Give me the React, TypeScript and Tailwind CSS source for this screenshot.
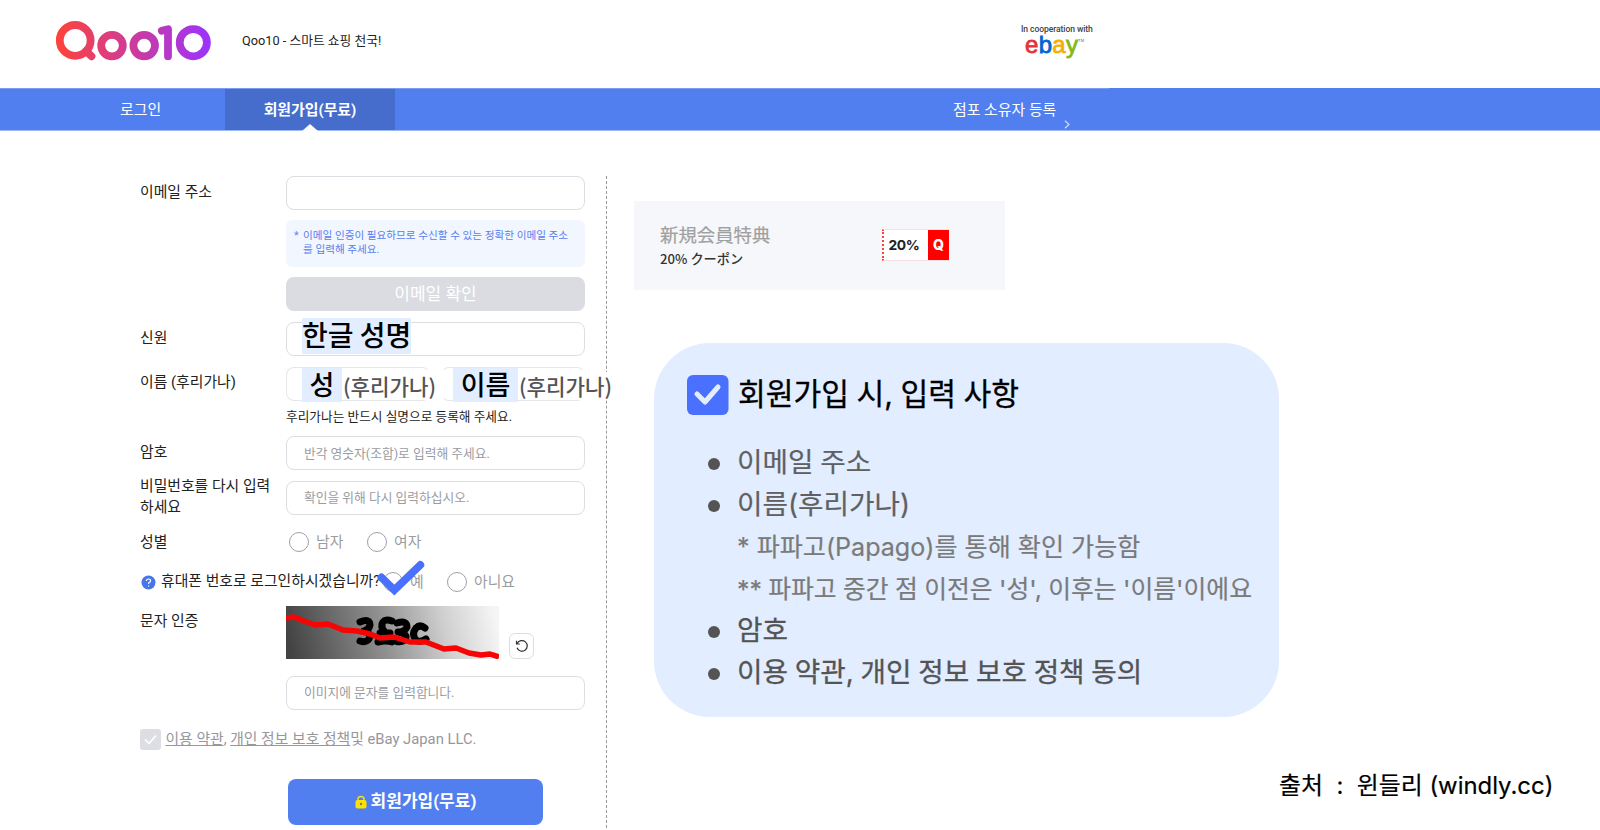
import React from "react";

const kr = "font-['Roboto','Noto_Sans_CJK_KR',sans-serif]";
const note = "font-['Noto_Sans_CJK_KR',sans-serif]";
const guide = "font-['Inter','Noto_Sans_CJK_KR',sans-serif]";

function Logo() {
  return (
    <svg width="160" height="42" viewBox="0 0 160 42" fill="none" strokeLinecap="round">
      <defs>
        <linearGradient id="brand" gradientUnits="userSpaceOnUse" x1="0" y1="0" x2="156" y2="0">
          <stop offset="0" stopColor="#ff4338" />
          <stop offset="1" stopColor="#9b33ff" />
        </linearGradient>
      </defs>
      <g stroke="url(#brand)" strokeWidth="7.8">
        <circle cx="20.2" cy="20.4" r="15.4" />
        <path d="M31 31 L36.5 36.3" />
        <circle cx="57" cy="25.6" r="10.8" />
        <circle cx="89.2" cy="25.6" r="10.8" />
        <path d="M106.8 10.8 L113 9.2 V36.2" strokeLinejoin="round" />
        <circle cx="138.3" cy="22.7" r="13.6" />
      </g>
    </svg>
  );
}

function Header() {
  return (
    <header className="flex h-[88px] items-start">
      <div className="mt-5 ml-[55px] w-[156px]"><Logo /></div>
      <p className="mt-[31px] ml-[31px] w-[200px] text-[12.75px] leading-5 whitespace-nowrap text-[#222]">Qoo10 - 스마트 쇼핑 천국!</p>
      <div className="mt-6 ml-[579px] w-[72px]">
        <p className="text-[8.6px] leading-[10px] font-medium tracking-[-0.1px] whitespace-nowrap text-[#444]">In cooperation with</p>
        <p className="ml-1 flex items-start font-['Liberation_Sans',sans-serif] text-[24px] leading-[22px] tracking-[0.3px]">
          <span className="text-[#e53238] [-webkit-text-stroke:0.8px]">e</span><span className="text-[#0064d2] [-webkit-text-stroke:0.8px]">b</span><span className="text-[#f5af02] [-webkit-text-stroke:0.8px]">a</span><span className="text-[#86b817] [-webkit-text-stroke:0.8px]">y</span>
          <span className="text-[4px] leading-[14px] tracking-normal text-[#666]">TM</span>
        </p>
      </div>
    </header>
  );
}

function Nav() {
  return (
    <nav className="h-[43px] border-b border-[#9db8f6] bg-[#517fef] text-[14.9px] leading-[43px] whitespace-nowrap text-white">
      <div className="flex h-[42px] w-[1109px] border-t border-[#7a9df3]">
        <span className="w-[225px] pl-[120px]">로그인</span>
        <span className="relative w-[170px] bg-[#466dcb] text-center font-bold">
          회원가입(무료)
          <svg className="absolute -bottom-px left-[77px]" width="16" height="7"><path d="M8 0 L16 7 H0Z" fill="#fff" /></svg>
        </span>
        <span className="ml-[558px]">점포 소유자 등록</span>
        <svg className="mt-[31px] ml-[7px]" width="8" height="9" fill="none" stroke="#cfdcff" strokeWidth="1.2"><path d="M2 .8 L6 4.5 L2 8.2" /></svg>
      </div>
    </nav>
  );
}

function Field({ children, className = "" }: { children?: React.ReactNode; className?: string }) {
  return <div className={`flex h-[34px] items-center rounded-lg border border-[#dddee3] bg-white text-[12.75px] whitespace-nowrap text-[#9b9ca1] ${className}`}>{children}</div>;
}

function Row({ label, className = "", labelClass = "leading-8", children }: { label: string; className?: string; labelClass?: string; children?: React.ReactNode }) {
  return (
    <div className={`flex items-start ${className}`}>
      <div className={`w-[146px] shrink-0 text-[14.85px] whitespace-pre text-[#222] ${labelClass}`}>{label}</div>
      <div className="w-[299px] shrink-0">{children}</div>
    </div>
  );
}

function Radio({ text, className }: { text: string; className: string }) {
  return (
    <span className={`flex items-center ${className}`}>
      <span className="h-5 w-5 shrink-0 rounded-full border border-[#9fa0a8]" />
      <span className="-mt-px ml-[7px] text-[14.85px] leading-5 text-[#9b9ca1]">{text}</span>
    </span>
  );
}

function Captcha() {
  return (
    <svg width="213" height="53" viewBox="0 0 213 53">
      <defs>
        <linearGradient id="shade" gradientUnits="userSpaceOnUse" x1="5" y1="48" x2="208" y2="4">
          <stop offset="0" stopColor="#434343" />
          <stop offset="0.45" stopColor="#909090" />
          <stop offset="0.75" stopColor="#cfcfcf" />
          <stop offset="1" stopColor="#f5f5f5" />
        </linearGradient>
      </defs>
      <rect width="213" height="53" fill="url(#shade)" />
      <g fill="none" stroke="#000" strokeWidth="7" strokeLinecap="round" strokeLinejoin="round">
        <path d="M74 16 Q84 12 84 19 Q83 24 78 25 Q86 27 83 33 Q80 37 74 35" />
        <path d="M106 15 Q98 12 96 18 Q95 23 99 26 M94 27 H104 M98 28 Q98 35 92 36 Q100 34 106 36" />
        <path d="M111 17 Q121 14 121 21 Q119 26 112 26 Q123 28 119 34 Q114 37 110 35" />
        <path d="M139 22 Q134 18 130 22 Q125 28 130 34 Q134 37 140 33" />
      </g>
      <path d="M0 12 L8 11 L18 15 L29 19 L42 18 L57 24 L71 25 L84 28 L94 32 L108 31 L124 36 L140 36 L158 43 L170 42 L183 47 L195 49 L204 48 L213 51" fill="none" stroke="#f60505" strokeWidth="5.5" strokeLinejoin="round" />
    </svg>
  );
}

function SignupForm() {
  return (
    <form className="relative w-[466px] shrink-0 pt-[45px]">
      <Row label="이메일 주소" className="h-11"><Field /></Row>
      <Row label="" className="h-[57px]">
        <div className="h-[47px] rounded-md bg-[#f2f6ff] pt-[9px] pl-[17px] text-[10.62px] leading-[14px] whitespace-nowrap text-[#5781ef]">
          <span className="-ml-[9px] inline-block w-[9px]">*</span>이메일 인증이 필요하므로 수신할 수 있는 정확한 이메일 주소<br />를 입력해 주세요.
        </div>
      </Row>
      <Row label="" className="h-[45px]">
        <div className="h-[34px] rounded-lg bg-[#dbdce1] text-center text-[17px] leading-[34px] text-white">이메일 확인</div>
      </Row>
      <Row label="신원" className="h-[45px]">
        <Field className="items-start pl-[15px]">
          <span className={`-mt-[5px] h-[36px] w-[109px] bg-[#e2edff] text-[28px] leading-[33px] font-medium text-black ${note}`}>한글 성명</span>
        </Field>
      </Row>
      <Row label="이름 (후리가나)" labelClass="leading-[31px]" className="h-[35px]">
        <div className={`flex gap-[11px] text-[28px] font-medium whitespace-nowrap text-black ${note}`}>
          {[["성", "ml-[15px] w-10", "border-[#e6e7ea] border-r-transparent"], ["이름", "ml-[11px] w-[65px]", "border-[#e6e7ea] border-x-transparent"]].map(([t, w, b]) => (
            <div key={t} className={`flex h-[34px] w-[144px] shrink-0 items-start rounded-lg border ${b}`}>
              <span className={`h-[34px] shrink-0 bg-[#e2edff] text-center text-[27px] leading-[31px] ${w}`}>{t}</span>
              <span className="relative mt-[4px] ml-px bg-white text-[21.2px] leading-[28px] text-[#545454]">(후리가나)</span>
            </div>
          ))}
        </div>
      </Row>
      <Row label="" className="h-[34px]"><p className="pt-[5px] text-[12.7px] leading-5 text-[#222]">후리가나는 반드시 실명으로 등록해 주세요.</p></Row>
      <Row label="암호" className="h-[44px]"><Field className="pt-px pl-[17px]">반각 영숫자(조합)로 입력해 주세요.</Field></Row>
      <Row label={"비밀번호를 다시 입력\n하세요"} labelClass="leading-[21px] -mt-[4px]" className="h-[45px]"><Field className="mt-px pl-[17px]">확인을 위해 다시 입력하십시오.</Field></Row>
      <Row label="성별" labelClass="leading-[34px]" className="h-9"><div className="flex h-[34px] items-center"><Radio text="남자" className="ml-[3px] w-[78px]" /><Radio text="여자" className="" /></div></Row>
      <div className="flex h-[45px] items-center pb-[3px]">
        <svg className="mt-px ml-px" width="15" height="15"><circle cx="7.5" cy="7.5" r="7" fill="#4676e8" /><path d="M5.4 6 Q5.5 4 7.5 4 Q9.6 4 9.6 5.8 Q9.5 7 7.6 8 V9 M7.6 10.4 V11.4" fill="none" stroke="#fff" strokeWidth="1.2" /></svg>
        <span className="-mt-px ml-[5px] w-[222px] text-[14.85px] whitespace-nowrap text-[#222]">휴대폰 번호로 로그인하시겠습니까?</span>
        <Radio text="예" className="w-16" />
        <Radio text="아니요" className="" />
      </div>
      <svg className="absolute top-[428px] left-[236px]" width="50" height="40" fill="none" stroke="#4a70ff" strokeWidth="7.8"><path d="M5.5 18.5 L18.3 31 L44.3 6" strokeLinecap="round" /></svg>
      <Row label="문자 인증" labelClass="leading-[30px]" className="h-[70px]">
        <div className="flex items-end">
          <Captcha />
          <span className="ml-2.5 flex h-[26px] w-[25px] items-center justify-center rounded-md border border-[#dddee3]">
            <svg width="14" height="14" viewBox="0 0 14 14" fill="none" stroke="#333" strokeWidth="1.2"><path d="M2.2 4.5 A5.3 5.3 0 1 1 2 8.8 M1.5 1.8 V5 H4.8" /></svg>
          </span>
        </div>
      </Row>
      <Row label="" className="h-[53px]"><Field className="h-[33px] pl-[17px]">이미지에 문자를 입력합니다.</Field></Row>
      <div className="flex h-[50px] items-start">
        <span className="h-[21px] w-[21px] rounded-[3px] bg-[#dddee3]"><svg width="21" height="21" fill="none" stroke="#fff" strokeWidth="1.6"><path d="M5 10.5 L9 14.5 L16 6.5" /></svg></span>
        <p className="ml-[4.5px] text-[14.8px] leading-5 whitespace-nowrap text-[#96979c]"><u>이용 약관</u>, <u>개인 정보 보호 정책</u>및 eBay Japan LLC.</p>
      </div>
      <button type="button" className="ml-[148px] flex h-[46px] w-[255px] items-center justify-center rounded-lg bg-[#517fef] text-[17px] font-bold text-white">
        <svg className="mr-1" width="12" height="14"><path d="M3 6 V4 Q3 1.5 6 1.5 Q9 1.5 9 4 V6" fill="none" stroke="#eedd20" strokeWidth="1.5" /><rect x=".5" y="5" width="11" height="8.5" rx="2" fill="#fde100" /><circle cx="6" cy="9" r="1.2" fill="#777" /></svg>
        회원가입(무료)
      </button>
    </form>
  );
}

function Coupon() {
  return (
    <section className="flex h-[89px] w-[371px] bg-[#f6f7fa] pt-[21px] pl-[26px] font-['Noto_Sans_CJK_JP',sans-serif]">
      <div className="w-[222px] whitespace-nowrap">
        <p className="text-[18.4px] leading-6 text-[#a0a0a0] [-webkit-text-stroke:0.2px]">新規会員特典</p>
        <p className="text-[13.2px] leading-[25px] font-medium text-[#333]">20% クーポン</p>
      </div>
      <div className="mt-[7px] flex h-[32px] w-[67px] border-y border-l-2 border-y-[#f7e0e0] border-l-[#ff4040] bg-white font-['Inter',sans-serif] leading-[30px] font-bold [border-left-style:dotted]">
        <span className="w-11 pr-1 text-center text-[13.8px] tracking-[-0.3px] text-[#222]">20%</span>
        <span className="flex-1 bg-[#f00] text-center text-[14px] font-extrabold text-white">Q</span>
      </div>
    </section>
  );
}

function Bullet({ children, className }: { children: string; className: string }) {
  return (
    <li className={`flex h-[42px] items-center text-[27.7px] [word-spacing:-1px] ${className}`}>
      <span className="mt-[2px] mr-[17px] ml-[21px] h-3 w-3 shrink-0 rounded-full bg-[#545454]" />
      {children}
    </li>
  );
}

function Guide() {
  return (
    <section className={`mt-[53px] ml-5 h-[374px] w-[625px] rounded-[56px] bg-[#e2edff] pt-[31px] pl-[33px] whitespace-nowrap ${guide}`}>
      <h2 className="flex h-[42px] items-center text-[30.2px] text-black [word-spacing:-1px] [-webkit-text-stroke:0.3px]">
        <svg className="mr-[9px] shrink-0" width="42" height="42"><rect x="0" y="1" width="41.5" height="40" rx="6" fill="#4a70ff" /><path d="M10 20 L18 28 L31 13" fill="none" stroke="#e2edff" strokeWidth="5" strokeLinecap="round" strokeLinejoin="round" /></svg>
        회원가입 시, 입력 사항
      </h2>
      <ul className="mt-[26px]">
        <Bullet className="text-[#606060] [-webkit-text-stroke:0.2px]">이메일 주소</Bullet>
        <Bullet className="text-[#606060] [-webkit-text-stroke:0.2px]">이름(후리가나)</Bullet>
        <li className="h-[42px] pl-[50px] text-[25.1px] leading-[42px] text-[#7a7a7a] [-webkit-text-stroke:0.2px]">* 파파고(Papago)를 통해 확인 가능함</li>
        <li className="h-[42px] pl-[50px] text-[24.8px] leading-[42px] text-[#7a7a7a] [word-spacing:-0.6px] [-webkit-text-stroke:0.2px]">** 파파고 중간 점 이전은 '성', 이후는 '이름'이에요</li>
        <Bullet className="text-[#545454] [-webkit-text-stroke:0.3px]">암호</Bullet>
        <Bullet className="text-[#545454] [-webkit-text-stroke:0.3px]">이용 약관, 개인 정보 보호 정책 동의</Bullet>
      </ul>
    </section>
  );
}

export default function App() {
  return (
    <div className={`h-[830px] w-[1600px] overflow-hidden bg-white ${kr}`}>
      <Header />
      <Nav />
      <main className="flex h-[699px] pl-[140px]">
        <SignupForm />
        <div className="mt-[45px] h-[652px] border-l border-dashed border-[#999]" />
        <div className="ml-[27px] pt-[70px]">
          <Coupon />
          <Guide />
          <p className={`mt-[51px] ml-[645px] text-[23.9px] leading-9 whitespace-pre text-black [-webkit-text-stroke:0.2px] ${guide}`}>{"출처  :  윈들리 (windly.cc)"}</p>
        </div>
      </main>
    </div>
  );
}
